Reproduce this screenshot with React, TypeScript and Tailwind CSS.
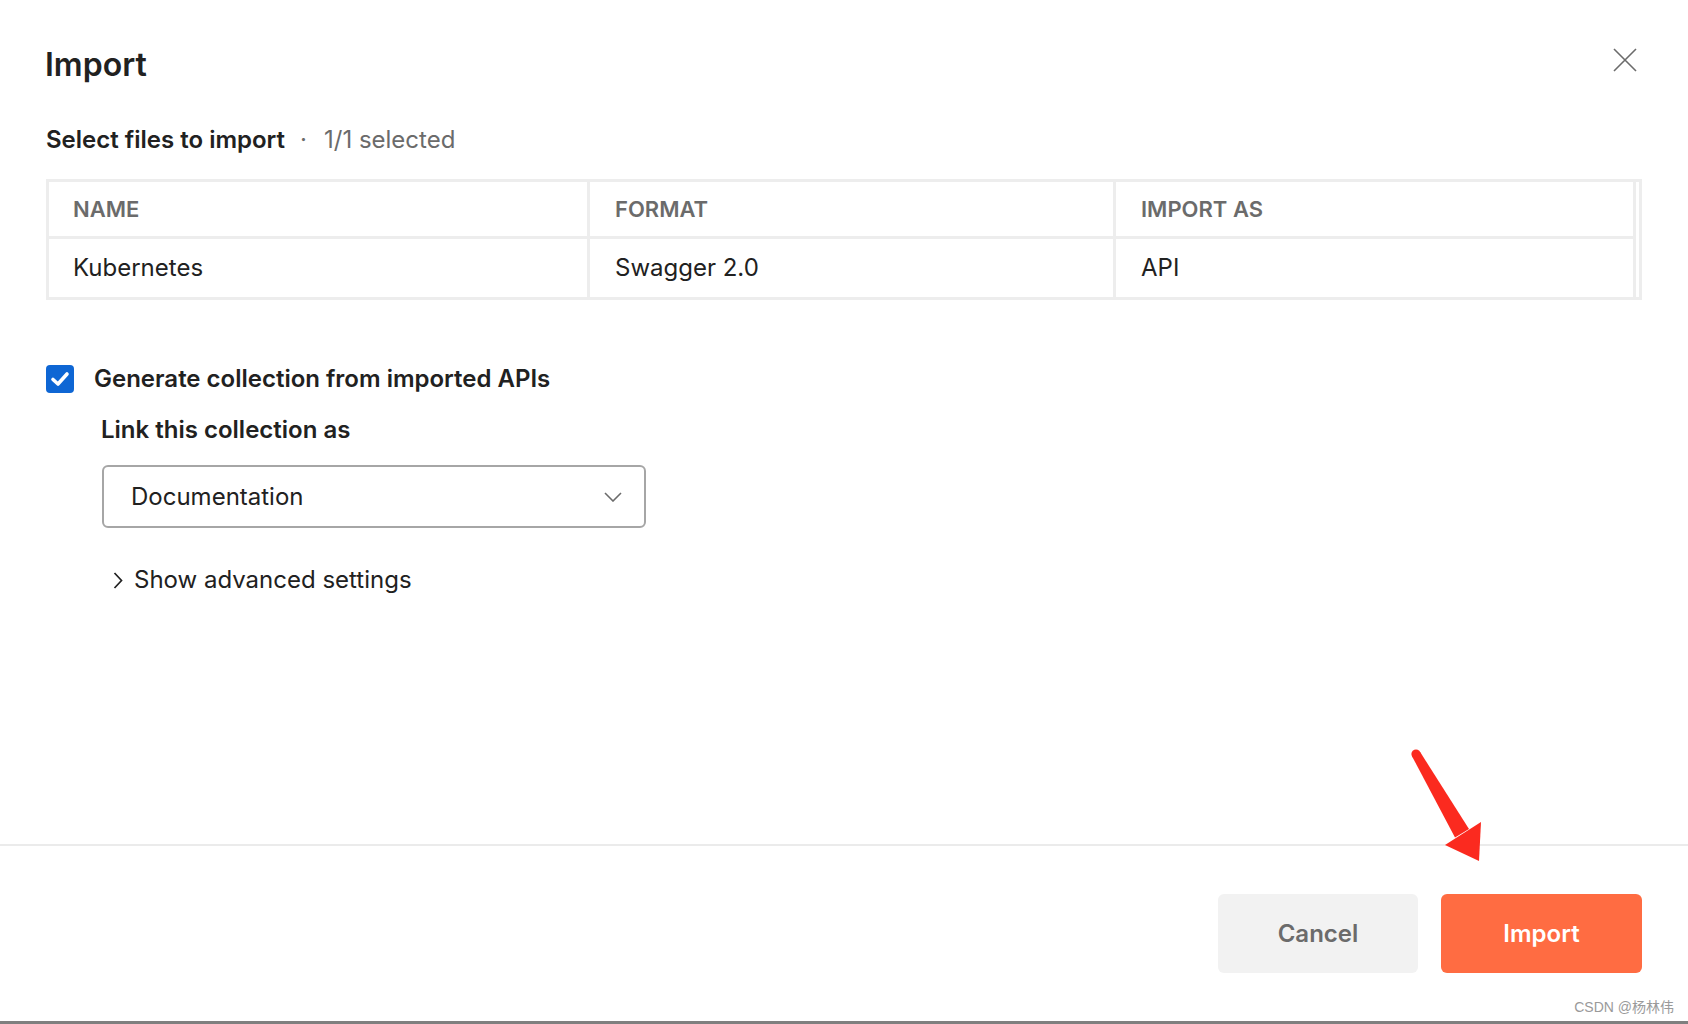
export default function App() {
  return (
    <div className="relative flex h-[1024px] w-full flex-col overflow-hidden bg-white font-['Inter',sans-serif] text-[#212121]">
      {/* header */}
      <div className="flex items-start justify-between pl-[45px] pr-[50px] pt-[44px]">
        <h1 className="text-[32px] font-semibold leading-[42px]">Import</h1>
        <button className="mt-[3px] flex h-[26px] w-[26px] items-center justify-center">
          <svg width="24" height="24" viewBox="0 0 24 24" fill="none" stroke="#6b6b6b" strokeWidth="1.6">
            <path d="M1 1L23 23M23 1L1 23" />
          </svg>
        </button>
      </div>

      <div className="px-[46px]">
        <div className="mt-[40px] flex items-center text-[24px] leading-[28px]">
          <span className="font-semibold">Select files to import</span>
          <span className="ml-[15px] mr-[17px] text-[#6b6b6b]">·</span>
          <span className="text-[#6b6b6b]">1/1 selected</span>
        </div>

        <div className="mt-[25px] border-[3px] border-[#ededed] pr-[3px]">
          <div className="grid grid-cols-[541px_526px_1fr] text-[22px] font-semibold uppercase text-[#6b6b6b]">
            <div className="flex h-[57px] items-center border-r-[3px] border-b-[3px] border-[#ededed] pl-[24px]">Name</div>
            <div className="flex h-[57px] items-center border-r-[3px] border-b-[3px] border-[#ededed] pl-[25px]">Format</div>
            <div className="flex h-[57px] items-center border-r-[3px] border-b-[3px] border-[#ededed] pl-[25px]">Import as</div>
          </div>
          <div className="grid grid-cols-[541px_526px_1fr] text-[24px]">
            <div className="flex h-[58px] items-center border-r-[3px] border-[#ededed] pl-[24px]">Kubernetes</div>
            <div className="flex h-[58px] items-center border-r-[3px] border-[#ededed] pl-[25px]">Swagger 2.0</div>
            <div className="flex h-[58px] items-center border-r-[3px] border-[#ededed] pl-[25px]">API</div>
          </div>
        </div>

        <label className="mt-[65px] flex items-center gap-[20px]">
          <span className="flex h-[28px] w-[28px] items-center justify-center rounded-[4px] bg-[#0e66d4]">
            <svg width="20" height="16" viewBox="0 0 20 16" fill="none" stroke="white" strokeWidth="3.6" strokeLinecap="round" strokeLinejoin="round">
              <path d="M3 8.5L8 13L17 3" />
            </svg>
          </span>
          <span className="text-[24px] font-semibold leading-[28px]">Generate collection from imported APIs</span>
        </label>

        <div className="pl-[56px]">
          <div className="mt-[23px] -ml-[1px] text-[24px] font-semibold leading-[28px]">Link this collection as</div>

          <div className="mt-[21px] flex h-[63px] w-[544px] items-center justify-between rounded-[6px] border-2 border-[#a6a6a6] pl-[27px] pr-[22px]">
            <span className="text-[24px]">Documentation</span>
            <svg width="18" height="10" viewBox="0 0 18 10" fill="none" stroke="#6b6b6b" strokeWidth="1.6">
              <path d="M1 1L9 9L17 1" />
            </svg>
          </div>

          <div className="mt-[38px] flex items-center gap-[11px] pl-[11px] text-[24px] leading-[28px]">
            <svg width="10" height="17" viewBox="0 0 10 17" fill="none" stroke="#212121" strokeWidth="1.7">
              <path d="M1.5 1L8.5 8.5L1.5 16" />
            </svg>
            <span>Show advanced settings</span>
          </div>
        </div>
      </div>

      <div className="flex-1" />

      {/* footer */}
      <div className="h-[2px] bg-[#ebebeb]" />
      <div className="flex justify-end gap-[23px] pr-[46px] pt-[48px] pb-[48px]">
        <button className="h-[79px] w-[200px] rounded-[6px] bg-[#f2f2f2] text-[24px] font-semibold text-[#6b6b6b]">Cancel</button>
        <button className="h-[79px] w-[201px] rounded-[6px] bg-[#ff6c42] text-[24px] font-semibold text-white">Import</button>
      </div>
      <div className="h-[3px] bg-[#7f7f7f]" />

      {/* annotation arrow */}
      <svg className="absolute left-[1400px] top-[740px]" width="100" height="130" viewBox="0 0 100 130">
        <circle cx="16" cy="14" r="4.6" fill="#fb2a1f" />
        <polygon points="20,11.8 12,16.2 55,97.5 69,89" fill="#fb2a1f" />
        <polygon points="45,105 81,82 79,121" fill="#fb2a1f" />
      </svg>

      <div className="absolute right-[14px] bottom-[6px] font-['Liberation_Sans','Noto_Sans_CJK_SC',sans-serif] text-[14px] text-[#9a9a9a]">
        CSDN @杨林伟
      </div>
    </div>
  );
}
